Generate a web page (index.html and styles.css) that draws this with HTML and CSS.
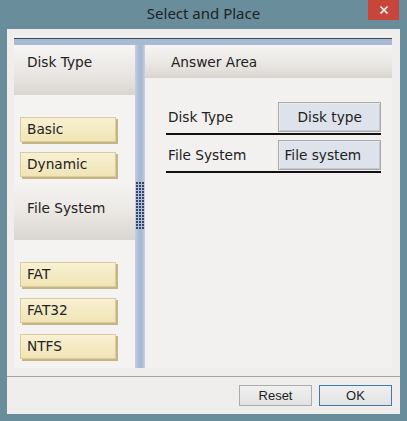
FILE: index.html
```html
<!DOCTYPE html>
<html>
<head>
<meta charset="utf-8">
<link rel="stylesheet" href="styles.css">
</head>
<body>
<div class="window">
  <div class="titlebar">
    <div></div>
    <div class="title">Select and Place</div>
    <div class="close"><svg width="10" height="10" viewBox="0 0 10 10"><path d="M1.5 1.5 L8.5 8.5 M8.5 1.5 L1.5 8.5" stroke="#fff" stroke-width="1.6" fill="none"/></svg></div>
  </div>
  <div class="client">
    <div class="panel">
      <div class="band"></div>
      <div class="body">
        <div class="leftcol">
          <div class="head head1">Disk Type</div>
          <div class="items items1">
            <div class="item">Basic</div>
            <div class="item">Dynamic</div>
          </div>
          <div class="head head2">File System</div>
          <div class="items items2">
            <div class="item">FAT</div>
            <div class="item">FAT32</div>
            <div class="item">NTFS</div>
          </div>
        </div>
        <div class="divider"><div class="grip"></div></div>
        <div class="rightcol">
          <div class="head head3">Answer Area</div>
          <div class="rows">
            <div class="row">
              <div class="label">Disk Type</div>
              <div class="slot center">Disk type</div>
            </div>
            <div class="row">
              <div class="label">File System</div>
              <div class="slot">File system</div>
            </div>
          </div>
        </div>
      </div>
    </div>
    <div class="footer">
      <div class="btn">Reset</div>
      <div class="btn ok">OK</div>
    </div>
  </div>
</div>
</body>
</html>
```
FILE: styles.css
```css
html, body {
  margin: 0;
  padding: 0;
}
body {
  width: 407px;
  height: 421px;
  background: #6a8d9b;
  overflow: hidden;
  font-family: "DejaVu Sans", Verdana, sans-serif;
}
.window {
  display: flex;
  flex-direction: column;
  height: 421px;
}
.titlebar {
  height: 29px;
  display: grid;
  grid-template-columns: 1fr auto 1fr;
  align-items: start;
}
.title {
  font-family: "Noto Sans", "Open Sans", sans-serif;
  font-size: 15px;
  color: #1c2226;
  line-height: 27px;
}
.close {
  justify-self: end;
  margin-right: 8px;
  width: 31px;
  height: 20px;
  background: #c7453b;
  display: flex;
  align-items: center;
  justify-content: center;
}
.client {
  margin: 0 7px;
  height: 385px;
  background: #efeeec;
  display: flex;
  flex-direction: column;
  padding-top: 9px;
  box-sizing: border-box;
}
.panel {
  margin: 0 8px 0 7px;
  border-top: 1px solid #3f4a52;
}
.band {
  height: 6px;
  background: #a8bad3;
}
.body {
  display: flex;
  height: 323px;
}
.leftcol {
  width: 121px;
  background: #f4f3f1;
  display: flex;
  flex-direction: column;
}
.head {
  font-size: 13.7px;
  line-height: 16px;
  color: #222;
  background: linear-gradient(#f6f5f3, #e6e3df 70%, #d8d4cf);
}
.head1 {
  height: 50px;
  padding: 9px 0 0 13px;
  box-sizing: border-box;
}
.head2 {
  height: 57px;
  padding: 17px 0 0 13px;
  box-sizing: border-box;
  margin-top: 6px;
  background: linear-gradient(#f4f3f1, #ebe8e4 50%, #d9d5d0);
}
.items {
  display: flex;
  flex-direction: column;
  gap: 10px;
  padding-left: 6px;
}
.items1 {
  padding-top: 22px;
}
.items2 {
  padding-top: 22px;
  gap: 11px;
}
.item {
  width: 96px;
  height: 25px;
  box-sizing: border-box;
  border: 1px solid #d8cca0;
  background: linear-gradient(#f7f0d2, #f1e5b6);
  box-shadow: 2px 2px 0 #c4b486;
  font-size: 13.7px;
  line-height: 22px;
  padding-left: 6px;
  color: #222;
}
.divider {
  width: 10px;
  background: linear-gradient(90deg, #c3d0e2, #a9bad2 40%, #a9bad2 70%, #c8d3e3);
  display: flex;
  justify-content: center;
  padding-top: 137px;
  box-sizing: border-box;
}
.grip {
  width: 8px;
  height: 47px;
  background:
    repeating-linear-gradient(90deg, transparent 0 2px, #aebfd6 2px 3px),
    repeating-linear-gradient(0deg, transparent 0 2px, #aebfd6 2px 3px),
    #33466a;
}
.rightcol {
  flex: 1;
  background: #f2f1ef;
  display: flex;
  flex-direction: column;
}
.head3 {
  height: 33px;
  padding: 9px 0 0 26px;
  box-sizing: border-box;
}
.rows {
  margin: 24px 0 0 21px;
  width: 215px;
  display: flex;
  flex-direction: column;
  gap: 5px;
}
.row {
  display: flex;
  align-items: center;
  border-bottom: 2px solid #111;
  height: 33px;
  box-sizing: border-box;
  padding-bottom: 2px;
}
.label {
  width: 111px;
  padding-left: 2px;
  font-size: 13.7px;
  color: #222;
}
.slot {
  width: 103px;
  height: 30px;
  box-sizing: border-box;
  border: 1px solid #a9a9a9;
  box-shadow: inset 1px 1px 0 #e8ebf0, inset -1px -1px 0 #c4c8d0;
  background: #dde2eb;
  font-size: 13.7px;
  line-height: 28px;
  padding-left: 5px;
  color: #222;
}
.slot.center {
  text-align: center;
  padding-left: 0;
}
.footer {
  margin-top: 8px;
  border-top: 1px solid #a3a3a3;
  display: flex;
  justify-content: flex-end;
  gap: 7px;
  padding: 8px 8px 0 0;
}
.btn {
  width: 73px;
  height: 21px;
  box-sizing: border-box;
  border: 1px solid #acacac;
  background: linear-gradient(#f0f0f0, #e2e2e2);
  font-family: "Liberation Sans", Arial, sans-serif;
  font-size: 13px;
  line-height: 19px;
  text-align: center;
  color: #1e1e1e;
}
.btn.ok {
  border-color: #3d7bad;
}
```
